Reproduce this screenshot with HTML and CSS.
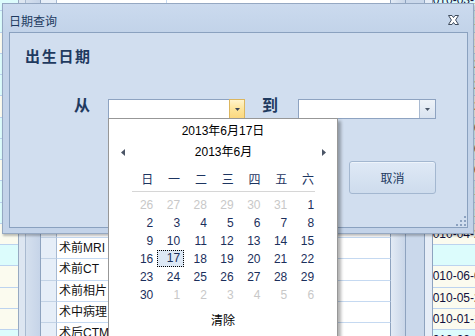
FILE: index.html
```html
<!DOCTYPE html>
<html>
<head>
<meta charset="utf-8">
<link rel="stylesheet" href="styles.css">
</head>
<body>
<div class="bg-grid">
  <div class="bg-row cy"><span class="bg-date">2010-03-12 09:20</span></div>
  <div class="bg-row cy"><span class="bg-date">2010-03-15 10:05</span></div>
  <div class="bg-row cr"><span class="bg-date">2010-03-18 14:30</span></div>
  <div class="bg-row cy"><span class="bg-date">2010-03-22 08:45</span></div>
  <div class="bg-row cy"><span class="bg-date">2010-03-25 11:10</span></div>
  <div class="bg-row cr"><span class="bg-date">2010-03-29 15:00</span></div>
  <div class="bg-row cy"><span class="bg-date">2010-04-02 09:30</span></div>
  <div class="bg-row cy"><span class="bg-date">2010-04-06 13:40</span></div>
  <div class="bg-row cr"><span class="bg-date">2010-04-09 10:15</span></div>
  <div class="bg-row cy"><span class="bg-date">2010-04-13 16:20</span></div>
  <div class="bg-row cy"><span class="bg-date">2010-04-19 09:00</span></div>
  <div class="bg-row cr"><span class="bg-date">2010-04-26 10:32</span></div>
  <div class="bg-row cy"></div>
  <div class="bg-row cr"><span class="bg-date">2010-06-03 14:20</span></div>
  <div class="bg-row cr"><span class="bg-date">2010-05-24 09:48</span></div>
  <div class="bg-row cr"><span class="bg-date">2010-01-18 11:05</span></div>
  <div class="bg-row cy"><span class="bg-date">2010-02-08 15:36</span></div>
</div>

<div class="win">
  <div class="w-a"></div>
  <div class="w-b"></div>
  <div class="w-rows">
    <div class="w-row"><div class="w-hd"></div><div class="w-c1">住院号</div><div class="w-c2"></div></div>
    <div class="w-row"><div class="w-hd"></div><div class="w-c1"></div><div class="w-c2"></div></div>
    <div class="w-row"><div class="w-hd"></div><div class="w-c1"></div><div class="w-c2"></div></div>
    <div class="w-row"><div class="w-hd"></div><div class="w-c1"></div><div class="w-c2"></div></div>
    <div class="w-row"><div class="w-hd"></div><div class="w-c1"></div><div class="w-c2"></div></div>
    <div class="w-row"><div class="w-hd"></div><div class="w-c1"></div><div class="w-c2"></div></div>
    <div class="w-row"><div class="w-hd"></div><div class="w-c1"></div><div class="w-c2"></div></div>
    <div class="w-row"><div class="w-hd"></div><div class="w-c1"></div><div class="w-c2"></div></div>
    <div class="w-row"><div class="w-hd"></div><div class="w-c1"></div><div class="w-c2"></div></div>
    <div class="w-row"><div class="w-hd"></div><div class="w-c1"></div><div class="w-c2"></div></div>
    <div class="w-row"><div class="w-hd"></div><div class="w-c1"></div><div class="w-c2"></div></div>
    <div class="w-row"><div class="w-hd"></div><div class="w-c1"></div><div class="w-c2"></div></div>
    <div class="w-row"><div class="w-hd"></div><div class="w-c1">术前MRI</div><div class="w-c2"></div></div>
    <div class="w-row"><div class="w-hd"></div><div class="w-c1">术前CT</div><div class="w-c2"></div></div>
    <div class="w-row"><div class="w-hd"></div><div class="w-c1">术前相片</div><div class="w-c2"></div></div>
    <div class="w-row"><div class="w-hd"></div><div class="w-c1">术中病理</div><div class="w-c2"></div></div>
    <div class="w-row"><div class="w-hd"></div><div class="w-c1">术后CTMR</div><div class="w-c2"></div></div>
  </div>
  <div class="w-c"></div>
  <div class="w-d"></div>
  <div class="w-e"></div>
</div>

<div class="dialog">
  <div class="dlg-title">
    <span>日期查询</span>
    <svg class="close" width="11" height="10" viewBox="0 0 11 10"><path d="M0.5 0.5H4L5.5 2.6L7 0.5H10.5L7.6 5L10.5 9.5H7L5.5 7.4L4 9.5H0.5L3.4 5Z" fill="#fff" stroke="#3e4b5d" stroke-width="1" stroke-linejoin="round"/></svg>
  </div>
  <div class="dlg-panel">
    <div class="heading">出生日期</div>
    <div class="range">
      <span class="lbl from">从</span>
      <div class="combo">
        <div class="field"></div>
        <div class="drop hot"><svg width="5" height="3" viewBox="0 0 5 3"><polygon points="0,0 5,0 2.5,3" fill="#3a4557"/></svg></div>
      </div>
      <span class="lbl to">到</span>
      <div class="combo wide">
        <div class="field"></div>
        <div class="drop"><svg width="5" height="3" viewBox="0 0 5 3"><polygon points="0,0 5,0 2.5,3" fill="#4a5668"/></svg></div>
      </div>
    </div>
    <div class="actions"><button class="btn">取消</button></div>
    <div class="grip-row">
      <svg width="10" height="10" viewBox="0 0 10 10">
        <g fill="#f4f8fc"><rect x="9" y="1" width="1" height="1"/><rect x="5" y="5" width="1" height="1"/><rect x="9" y="5" width="1" height="1"/><rect x="1" y="9" width="1" height="1"/><rect x="5" y="9" width="1" height="1"/><rect x="9" y="9" width="1" height="1"/></g>
        <g fill="#8ca2c0"><rect x="8" y="0" width="2" height="2"/><rect x="4" y="4" width="2" height="2"/><rect x="8" y="4" width="2" height="2"/><rect x="0" y="8" width="2" height="2"/><rect x="4" y="8" width="2" height="2"/><rect x="8" y="8" width="2" height="2"/></g>
      </svg>
    </div>
  </div>
</div>

<div class="cal">
  <div class="cal-today">2013年6月17日</div>
  <div class="cal-nav">
    <svg width="4" height="7" viewBox="0 0 4 7"><polygon points="4,0 4,7 0,3.5" fill="#4b5566"/></svg>
    <span>2013年6月</span>
    <svg width="4" height="7" viewBox="0 0 4 7"><polygon points="0,0 0,7 4,3.5" fill="#4b5566"/></svg>
  </div>
  <div class="cal-grid cal-head">
    <span>日</span><span>一</span><span>二</span><span>三</span><span>四</span><span>五</span><span>六</span>
  </div>
  <div class="cal-rule"></div>
  <div class="cal-grid cal-days">
    <span class="o">26</span><span class="o">27</span><span class="o">28</span><span class="o">29</span><span class="o">30</span><span class="o">31</span><span>1</span>
    <span>2</span><span>3</span><span>4</span><span>5</span><span>6</span><span>7</span><span>8</span>
    <span>9</span><span>10</span><span>11</span><span>12</span><span>13</span><span>14</span><span>15</span>
    <span>16</span><span class="sel">17</span><span>18</span><span>19</span><span>20</span><span>21</span><span>22</span>
    <span>23</span><span>24</span><span>25</span><span>26</span><span>27</span><span>28</span><span>29</span>
    <span>30</span><span class="o">1</span><span class="o">2</span><span class="o">3</span><span class="o">4</span><span class="o">5</span><span class="o">6</span>
  </div>
  <div class="cal-clear">清除</div>
</div>
</body>
</html>
```

FILE: styles.css
```css
* { box-sizing: border-box; }
html, body { margin: 0; padding: 0; }
body {
  width: 475px;
  height: 336px;
  overflow: hidden;
  position: relative;
  display: flow-root;
  background: #dcfcfc;
  font-family: "Liberation Sans", "Noto Sans CJK SC", sans-serif;
  font-size: 12px;
}

/* background grid (far window) */
.bg-grid { margin-top: -10px; }
.bg-row {
  height: 21.25px;
  border-bottom: 1px solid #bcd3ef;
  display: flex;
  overflow: hidden;
}
.bg-row.cy { background: #dcfcfc; }
.bg-row.cr { background: #fbfbef; }
.bg-date {
  margin-left: 426px;
  line-height: 20px;
  color: #10103c;
  white-space: nowrap;
}

/* middle window */
.win {
  position: absolute;
  left: 18px;
  top: -17px;
  height: 353px;
  display: flex;
  background: #fff;
}
.w-a { width: 8px; background: #dde6f1; border-left: 1px solid #97a9c1; border-right: 1px solid #a9bad0; }
.w-b { width: 15px; background: linear-gradient(90deg, #d5e0ee, #c6d4e8); border-right: 1px solid #8ea3bf; }
.w-rows { width: 350px; display: flex; flex-direction: column; }
.w-row { height: 21.25px; display: flex; flex: none; }
.w-hd { width: 16px; background: #e6eef8; border-right: 1px solid #a7bad3; border-bottom: 1px solid #c3d3e6; }
.w-c1 {
  width: 110px;
  border-right: 1px solid #c5d9f1;
  border-bottom: 1px solid #c5d9f1;
  padding-left: 2px;
  line-height: 21px;
  color: #111;
  white-space: nowrap;
  overflow: hidden;
}
.w-c2 { width: 224px; border-right: 1px solid #8ea3bf; border-bottom: 1px solid #c5d9f1; }
.w-c { width: 15px; background: linear-gradient(90deg, #e3ebf5, #c9d6e8); border-right: 1px solid #8ea3bf; }
.w-d { width: 19px; background: #cad8eb; border-right: 1px solid #8ea3bf; }
.w-e { width: 8px; background: #e6edf7; border-right: 1px solid #8ea3bf; }

/* dialog */
.dialog {
  position: absolute;
  left: 2px;
  top: 3px;
  width: 472px;
  height: 231px;
  border: 1px solid #95a8c2;
  background: #c3d3e9;
  box-shadow: 1px 2px 2px rgba(0, 0, 0, 0.25);
  display: flex;
  flex-direction: column;
}
.dlg-title {
  height: 28px;
  flex: none;
  display: flex;
  justify-content: space-between;
  align-items: flex-start;
  padding: 5px 14px 0 6px;
  background: linear-gradient(#cbdaee, #c2d3e9);
  color: #1d3a5f;
  font-family: "Noto Sans CJK SC", sans-serif;
  font-size: 12px;
  line-height: 23px;
}
.close { margin-top: 6px; }
.dlg-panel {
  flex: 1;
  margin: 0 5px 5px 6px;
  border: 1px solid #8aa1bf;
  background: #d1deef;
  display: flex;
  flex-direction: column;
}
.heading {
  margin: 12.5px 0 0 15px;
  font-family: "Noto Sans CJK SC", sans-serif;
  font-size: 15px;
  font-weight: bold;
  letter-spacing: 1.7px;
  line-height: 20px;
  color: #1f3a5f;
}
.range {
  display: flex;
  align-items: flex-start;
  margin: 33.5px 0 0 64px;
  height: 20px;
}
.lbl {
  width: 16px;
  margin-top: -5px;
  line-height: 20px;
  font-family: "Noto Sans CJK SC", sans-serif;
  font-size: 16px;
  font-weight: bold;
  color: #1f3a5f;
}
.lbl.from { margin-right: 18px; }
.lbl.to { margin-left: 17px; margin-right: 20px; }
.combo {
  width: 137px;
  height: 20px;
  border: 1px solid #8ea3c1;
  background: #fff;
  display: flex;
}
.combo.wide { width: 138px; }
.field { flex: 1; }
.drop {
  width: 16px;
  border-left: 1px solid #a9bad1;
  background: linear-gradient(#edf2f8, #d9e3f0);
  display: flex;
  align-items: center;
  justify-content: center;
}
.drop.hot {
  margin: -1px -1px -1px 0;
  height: 20px;
  border: 1px solid #dcb65e;
  background: linear-gradient(#fff4cc, #fde49a 50%, #fbd87f);
}
.actions {
  display: flex;
  justify-content: flex-end;
  margin-top: 42px;
  padding-right: 31px;
}
.btn {
  width: 87px;
  height: 33px;
  margin: 0;
  padding: 0;
  border: 1px solid #a3b7d0;
  border-radius: 3px;
  background: linear-gradient(#dfe9f6, #cedced);
  box-shadow: inset 0 1px 0 #eef4fb;
  font-family: "Noto Sans CJK SC", sans-serif;
  font-size: 12px;
  color: #1e3a5f;
}
.grip-row {
  margin-top: auto;
  display: flex;
  justify-content: flex-end;
  padding: 0 1px 1px 0;
}
.grip-row svg { display: block; }

/* calendar dropdown */
.cal {
  position: absolute;
  left: 108px;
  top: 118px;
  width: 230px;
  height: 232px;
  border: 1px solid #979797;
  background: #fff;
  box-shadow: 3px 3px 3px rgba(0, 0, 0, 0.3);
  font-family: "Liberation Sans", "Noto Sans CJK SC", sans-serif;
  font-size: 12px;
  color: #000;
}
.cal-today { padding-top: 3px; line-height: 18px; text-align: center; }
.cal-nav {
  margin-top: 3px;
  height: 18px;
  line-height: 18px;
  display: flex;
  align-items: center;
  justify-content: space-between;
  padding: 0 11px 0 12px;
}
.cal-nav svg { display: block; }
.cal-grid {
  display: grid;
  grid-template-columns: repeat(7, 26.8px);
  margin-left: 21px;
}
.cal-grid span {
  height: 18px;
  line-height: 18px;
  text-align: right;
  padding-right: 3.5px;
}
.cal-head { margin-top: 10px; color: #1d3561; }
.cal-rule { height: 1px; width: 183px; margin: 2px 0 0 23px; background: #d6d6d6; }
.cal-days { margin-top: 4px; color: #1b2f5c; }
.cal-days .o { color: #c8c8c8; }
.cal-days .sel {
  height: 17px;
  line-height: 15px;
  padding-right: 2.5px;
  border: 1px dotted #000;
  background: #dde8f5;
}
.cal-clear { margin-top: 8px; line-height: 18px; text-align: center; }
```
